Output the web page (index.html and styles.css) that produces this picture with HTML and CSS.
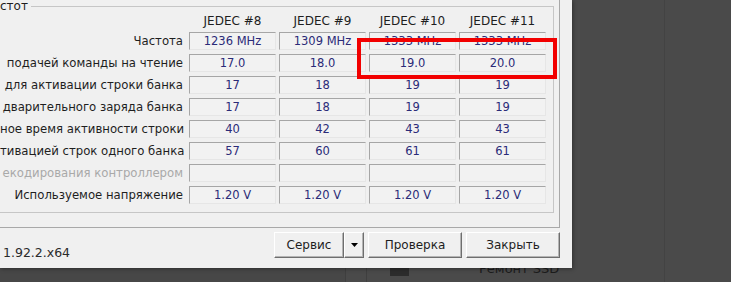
FILE: index.html
```html
<!DOCTYPE html>
<html lang="ru">
<head>
    <meta charset="UTF-8">
    <meta name="viewport" content="width=device-width, initial-scale=1.0">
    <title>CPU-Z SPD</title>
    <link rel="stylesheet" href="styles.css">
</head>
<body>
    <div class="desk">
        <div class="desk-col col-a"></div>
        <div class="desk-col col-b"></div>
        <div class="desk-col col-c">
            <div class="desk-item">
                <span class="desk-icon"></span>
                <span class="desk-text">Ремонт SSD</span>
            </div>
        </div>
        <div class="desk-col col-d"></div>
    </div>

    <div class="window">
        <div class="tab-panel">
            <fieldset class="group">
                <legend>стот</legend>
                <div class="timings">
                    <div class="label"></div>
                    <div class="head">JEDEC #8</div>
                    <div class="head">JEDEC #9</div>
                    <div class="head">JEDEC #10</div>
                    <div class="head">JEDEC #11</div>

                    <div class="label">Частота</div>
                    <div class="cell">1236 MHz</div>
                    <div class="cell">1309 MHz</div>
                    <div class="cell">1333 MHz</div>
                    <div class="cell">1333 MHz</div>

                    <div class="label">подачей команды на чтение</div>
                    <div class="cell">17.0</div>
                    <div class="cell">18.0</div>
                    <div class="cell">19.0</div>
                    <div class="cell">20.0</div>

                    <div class="label">для активации строки банка</div>
                    <div class="cell">17</div>
                    <div class="cell">18</div>
                    <div class="cell">19</div>
                    <div class="cell">19</div>

                    <div class="label">дварительного заряда банка</div>
                    <div class="cell">17</div>
                    <div class="cell">18</div>
                    <div class="cell">19</div>
                    <div class="cell">19</div>

                    <div class="label">ное время активности строки</div>
                    <div class="cell">40</div>
                    <div class="cell">42</div>
                    <div class="cell">43</div>
                    <div class="cell">43</div>

                    <div class="label">тивацией строк одного банка</div>
                    <div class="cell">57</div>
                    <div class="cell">60</div>
                    <div class="cell">61</div>
                    <div class="cell">61</div>

                    <div class="label disabled">екодирования контроллером</div>
                    <div class="cell"></div>
                    <div class="cell"></div>
                    <div class="cell"></div>
                    <div class="cell"></div>

                    <div class="label">Используемое напряжение</div>
                    <div class="cell">1.20 V</div>
                    <div class="cell">1.20 V</div>
                    <div class="cell">1.20 V</div>
                    <div class="cell">1.20 V</div>
                </div>
            </fieldset>
        </div>

        <div class="footer">
            <span class="version">1.92.2.x64</span>
            <div class="actions">
                <div class="split">
                    <button class="btn btn-main">Сервис</button>
                    <button class="btn btn-arrow">
                        <svg width="7" height="4" viewBox="0 0 7 4"><path d="M0 0h7L3.5 4z" fill="#000"/></svg>
                    </button>
                </div>
                <button class="btn btn-wide">Проверка</button>
                <button class="btn btn-wide">Закрыть</button>
            </div>
        </div>

        <!-- red marker drawn over the two last columns -->
        <div class="highlight"></div>
    </div>
</body>
</html>
```

FILE: styles.css
```css
body {
    margin: 0;
    width: 731px;
    height: 282px;
    overflow: hidden;
    position: relative;
    background-color: #4a4a4a;
    font-family: "DejaVu Sans", sans-serif;
    font-size: 12px;
    color: #1e1e1e;
}
.desk {
    display: flex;
    height: 282px;
}
.desk-col {
    height: 100%;
}
.col-a { width: 345px; background-color: #474747; }
.col-b { width: 20px; border-left: 1px solid #3f3f3f; border-right: 1px solid #3f3f3f; }
.col-c { width: 297px; }
.col-d { flex: 1; border-left: 1px solid #434343; }
.desk-item {
    display: flex;
    align-items: flex-end;
    gap: 70px;
    margin-top: 262px;
    padding-left: 23px;
}
.desk-icon {
    width: 19px;
    height: 12px;
    background-color: #2c2c2c;
}
.desk-text {
    font-size: 13px;
    line-height: 14px;
    color: #1c1c1c;
}
.window {
    position: absolute;
    left: 0;
    top: 0;
    width: 572px;
    height: 268px;
    background-color: #f0f0f0;
    box-shadow: 1px 1px 4px rgba(0, 0, 0, 0.35);
}
.tab-panel {
    width: 560px;
    height: 228px;
    box-sizing: border-box;
    border-right: 1px solid #a8a8a8;
    border-bottom: 1px solid #a8a8a8;
    overflow: hidden;
}
.group {
    box-sizing: border-box;
    width: 559px;
    height: 213px;
    margin: 0 0 0 -5px;
    padding: 0 0 0 4px;
    border: 1px solid #c6c6c6;
}
.group legend {
    padding: 0 3px 0 0;
    font-size: 12px;
    line-height: 12px;
}
.timings {
    display: grid;
    grid-template-columns: 186px repeat(4, 87px);
    grid-template-rows: 14px repeat(8, 18px);
    column-gap: 3px;
    row-gap: 4px;
    margin-top: 2px;
}
.label {
    text-align: right;
    white-space: nowrap;
    padding-right: 3px;
    line-height: 18px;
    font-size: 11.7px;
}
.label.disabled {
    color: #a9a9a9;
}
.head {
    text-align: center;
    line-height: 14px;
}
.cell {
    box-sizing: border-box;
    border: 1px solid;
    border-color: #a6a6a6 #e6e6e6 #e6e6e6 #a6a6a6;
    background-color: #f2f2f2;
    text-align: center;
    line-height: 16px;
    font-size: 11.5px;
    color: #2b2b78;
}
.footer {
    display: flex;
    justify-content: space-between;
    padding: 4px 12px 0 3px;
}
.version {
    align-self: flex-end;
    font-size: 12.5px;
    color: #2a2a2a;
    margin-bottom: -2px;
}
.actions {
    display: flex;
    gap: 4px;
}
.split {
    display: flex;
}
.btn {
    box-sizing: border-box;
    height: 26px;
    margin: 0;
    padding: 0;
    font-family: "DejaVu Sans", sans-serif;
    font-size: 12px;
    color: #1e1e1e;
    background-color: #f0f0f0;
    border: 1px solid;
    border-color: #ffffff #6e6e6e #6e6e6e #ffffff;
    box-shadow: inset -1px -1px #b4b4b4;
}
.btn-main { width: 70px; }
.btn-arrow {
    width: 20px;
    display: flex;
    align-items: center;
    justify-content: center;
}
.btn-wide { width: 94px; }
.highlight {
    position: absolute;
    left: 357px;
    top: 38px;
    width: 200px;
    height: 41px;
    box-sizing: border-box;
    border: 4px solid #f20000;
}
```
